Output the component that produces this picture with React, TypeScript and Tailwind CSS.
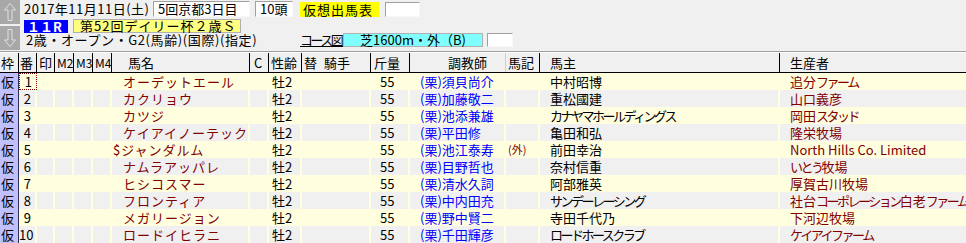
import React from "react";

const FONT = { fontFamily: '"Noto Sans CJK JP", "Noto Sans", sans-serif' };

type Row = {
  no: string;
  name: string;
  dollar?: boolean;
  trainer: string;
  mark?: string;
  owner: string;
  breeder: string;
};

const rows: Row[] = [
  { no: "1", name: "オーデットエール", trainer: "(栗)須貝尚介", owner: "中村昭博", breeder: "追分ファーム" },
  { no: "2", name: "カクリョウ", trainer: "(栗)加藤敬二", owner: "重松國建", breeder: "山口義彦" },
  { no: "3", name: "カツジ", trainer: "(栗)池添兼雄", owner: "カナヤマホールディングス", breeder: "岡田スタッド" },
  { no: "4", name: "ケイアイノーテック", trainer: "(栗)平田修", owner: "亀田和弘", breeder: "隆栄牧場" },
  { no: "5", name: "ジャンダルム", dollar: true, trainer: "(栗)池江泰寿", mark: "(外)", owner: "前田幸治", breeder: "North Hills Co. Limited" },
  { no: "6", name: "ナムラアッパレ", trainer: "(栗)目野哲也", owner: "奈村信重", breeder: "いとう牧場" },
  { no: "7", name: "ヒシコスマー", trainer: "(栗)清水久詞", owner: "阿部雅英", breeder: "厚賀古川牧場" },
  { no: "8", name: "フロンティア", trainer: "(栗)中内田充", owner: "サンデーレーシング", breeder: "社台コーポレーション白老ファーム" },
  { no: "9", name: "メガリージョン", trainer: "(栗)野中賢二", owner: "寺田千代乃", breeder: "下河辺牧場" },
  { no: "10", name: "ロードイヒラニ", trainer: "(栗)千田輝彦", owner: "ロードホースクラブ", breeder: "ケイアイファーム" },
];

function isKana(s: string) {
  const c = s.charCodeAt(0);
  return c >= 0x3040 && c <= 0x30ff;
}

// Narrow kana runs (the reference font has proportional kana)
function Kana({ text }: { text: string }) {
  const parts: string[] = [];
  for (const ch of text) {
    const last = parts.length ? parts[parts.length - 1] : "";
    if (last && isKana(last) === isKana(ch)) parts[parts.length - 1] = last + ch;
    else parts.push(ch);
  }
  return (
    <>
      {parts.map((p, i) =>
        isKana(p) ? (
          <span key={i} className="[letter-spacing:-2.5px]">
            {p}
          </span>
        ) : (
          <span key={i}>{p}</span>
        )
      )}
    </>
  );
}

const GRID =
  "grid grid-cols-[19px_18px_18px_19px_19px_19px_138px_19px_33px_18px_51px_39px_96px_34px_240px_186px]";

function NavButton({ up }: { up: boolean }) {
  return (
    <div className="w-[20px] h-[24px] bg-[#a8a8a8] flex items-center justify-center">
      <svg width="14" height="20" viewBox="0 0 14 20">
        {up ? (
          <polygon points="7,1.5 12.5,8 9,8 9,18.5 5,18.5 5,8 1.5,8" fill="none" stroke="#e0e0e0" strokeWidth="1" />
        ) : (
          <polygon points="7,18.5 12.5,12 9,12 9,1.5 5,1.5 5,12 1.5,12" fill="none" stroke="#e0e0e0" strokeWidth="1" />
        )}
      </svg>
    </div>
  );
}

function HeaderCell({ children, line = true, className = "" }: { children?: React.ReactNode; line?: boolean; className?: string }) {
  return (
    <div className={`h-[19px] leading-[19px] flex items-center whitespace-nowrap ${line ? "border-r border-black" : ""} ${className}`}>
      {children}
    </div>
  );
}

const sunken = "bg-white border-t border-l border-[#a0a0a0] border-r border-b border-r-[#f8f8f8] border-b-[#f8f8f8]";

export default function App() {
  return (
    <div className="w-[966px] h-[243px] overflow-hidden bg-[#f0f0f0] text-[13px] text-black" style={FONT}>
      {/* top panel */}
      <div className="flex h-[51px]">
        <div className="flex flex-col gap-[2px] w-[20px]">
          <NavButton up />
          <NavButton up={false} />
        </div>
        <div className="flex flex-col pl-[4px] pt-[1px]">
          <div className="flex items-center h-[16px]">
            <div className="w-[129px] h-[16px] leading-[16px] whitespace-nowrap tracking-[0.5px]">2017年11月11日(土)</div>
            <div className={`w-[97px] h-[16px] leading-[14px] pl-[4px] whitespace-nowrap ${sunken}`}>5回京都3日目</div>
            <div className={`w-[38px] h-[16px] leading-[14px] ml-[5px] pl-[4px] whitespace-nowrap ${sunken}`}>10頭</div>
            <div className="w-[79px] h-[15px] leading-[15px] ml-[7px] bg-[#ffff00] pl-[3px] whitespace-nowrap tracking-[1px]">仮想出馬表</div>
            <div className={`w-[35px] h-[15px] ml-[6px] ${sunken}`}></div>
          </div>
          <div className="flex items-center h-[14px] mt-[2px]">
            <div className="w-[44px] h-[13px] leading-[13px] bg-[#0000ff] text-white font-bold pl-[3px] whitespace-nowrap">１１R</div>
            <div className="w-[168px] h-[14px] leading-[12px] ml-[5px] bg-[#ffff80] border border-[#b0b0b0] pl-[6px] whitespace-nowrap tracking-[1px]">第52回デイリー杯２歳Ｓ</div>
          </div>
          <div className="flex items-center h-[14px]">
            <div className="w-[276px] h-[14px] leading-[14px] pl-[2px] whitespace-nowrap tracking-[0.6px]">2歳・オープン・G2(馬齢)(国際)(指定)</div>
            <div className="w-[43px] h-[14px] leading-[14px] underline whitespace-nowrap">
              <Kana text="コース図" />
            </div>
            <div className="w-[140px] h-[14px] leading-[12px] bg-[#80ffff] border border-[#b0b0b0] text-center whitespace-nowrap">芝1600m・外（B)</div>
            <div className={`w-[26px] h-[14px] ml-[4px] ${sunken}`}></div>
          </div>
        </div>
      </div>
      <div className="h-[1px] bg-[#a0a0a0]"></div>
      <div className="h-[1px] bg-white"></div>
      {/* header */}
      <div className={`${GRID} h-[20px] border-b border-black items-center`}>
        <HeaderCell className="pl-[1px]">枠</HeaderCell>
        <HeaderCell className="pl-[1px]">番</HeaderCell>
        <HeaderCell className="pl-[2px]">印</HeaderCell>
        <HeaderCell className="pl-[2px] text-[12px]">M2</HeaderCell>
        <HeaderCell className="pl-[2px] text-[12px]">M3</HeaderCell>
        <HeaderCell className="pl-[2px] text-[12px]">M4</HeaderCell>
        <HeaderCell className="pl-[16px]">馬名</HeaderCell>
        <HeaderCell className="pl-[4px]">C</HeaderCell>
        <HeaderCell className="pl-[2px]">性齢</HeaderCell>
        <HeaderCell line={false} className="pl-[2px]">替</HeaderCell>
        <HeaderCell className="pl-[4px]">騎手</HeaderCell>
        <HeaderCell className="pl-[3px]">斤量</HeaderCell>
        <HeaderCell className="pl-[38px] border-r-[#d0d0d0]">調教師</HeaderCell>
        <HeaderCell className="pl-[2px]">馬記</HeaderCell>
        <HeaderCell className="pl-[10px]">馬主</HeaderCell>
        <HeaderCell line={false} className="pl-[10px]">生産者</HeaderCell>
      </div>
      {/* rows */}
      {rows.map((r, i) => {
        const bg = i % 2 === 0 ? "bg-[#ffffe0]" : "bg-[#f0f0f0]";
        const sep = "border-r-2 border-[#ffffe0]";
        return (
          <div key={r.no} className={`${GRID} h-[17px] leading-[17px] ${bg}`}>
            <div className="bg-[#c0c0ff] border-r border-[#303050] pl-[1px]">仮</div>
            <div
              className={`text-right pr-[4px] ${
                i === 0 ? "border border-dotted border-[#800000] leading-[15px]" : sep
              }`}
            >
              {r.no}
            </div>
            <div className={sep}></div>
            <div className={sep}></div>
            <div className={sep}></div>
            <div className={sep}></div>
            <div className={`${sep} text-[#800000] whitespace-nowrap tracking-[1px] ${r.dollar ? "pl-[1px]" : "pl-[11px]"}`}>
              {r.dollar ? "$" : ""}
              {r.name}
            </div>
            <div className={sep}></div>
            <div className={`${sep} pl-[3px]`}>牡2</div>
            <div></div>
            <div className={sep}></div>
            <div className={`${sep} pl-[9px]`}>55</div>
            <div className={`${sep} text-[#0000ff] pl-[10px] whitespace-nowrap`}>{r.trainer}</div>
            <div className={`${sep} text-[#800000] text-[11px] pl-[2px] whitespace-nowrap`}>{r.mark ?? ""}</div>
            <div className={`${sep} pl-[10px] whitespace-nowrap overflow-hidden`}>
              <Kana text={r.owner} />
            </div>
            <div className="text-[#800000] pl-[10px] whitespace-nowrap overflow-hidden">
              <Kana text={r.breeder} />
            </div>
          </div>
        );
      })}
    </div>
  );
}
